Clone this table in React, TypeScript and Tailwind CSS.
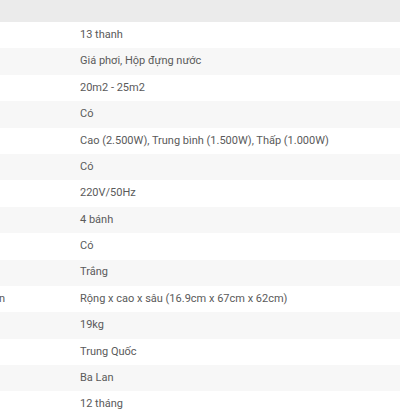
const rows: { label: string; value: string }[] = [
  { label: "", value: "13 thanh" },
  { label: "", value: "Giá phơi, Hộp đựng nước" },
  { label: "", value: "20m2 - 25m2" },
  { label: "", value: "Có" },
  { label: "", value: "Cao (2.500W), Trung bình (1.500W), Thấp (1.000W)" },
  { label: "", value: "Có" },
  { label: "", value: "220V/50Hz" },
  { label: "", value: "4 bánh" },
  { label: "", value: "Có" },
  { label: "", value: "Trắng" },
  { label: "n", value: "Rộng x cao x sâu (16.9cm x 67cm x 62cm)" },
  { label: "", value: "19kg" },
  { label: "", value: "Trung Quốc" },
  { label: "", value: "Ba Lan" },
  { label: "", value: "12 tháng" },
];

export default function App() {
  return (
    <div className="w-[400px] h-[420px] overflow-hidden bg-white text-[11px] text-[#5a5a5a] font-['Roboto',sans-serif]">
      <div className="h-[22px] bg-[#ebebeb]" />
      {rows.map((r, i) => (
        <div
          key={i}
          className={`flex items-center h-[26.4px] ${i % 2 === 1 ? "bg-[#f7f7f7]" : "bg-white"}`}
        >
          <div className="w-[81px] shrink-0 -ml-[1px]">{r.label}</div>
          <div className="flex-1">{r.value}</div>
        </div>
      ))}
    </div>
  );
}
